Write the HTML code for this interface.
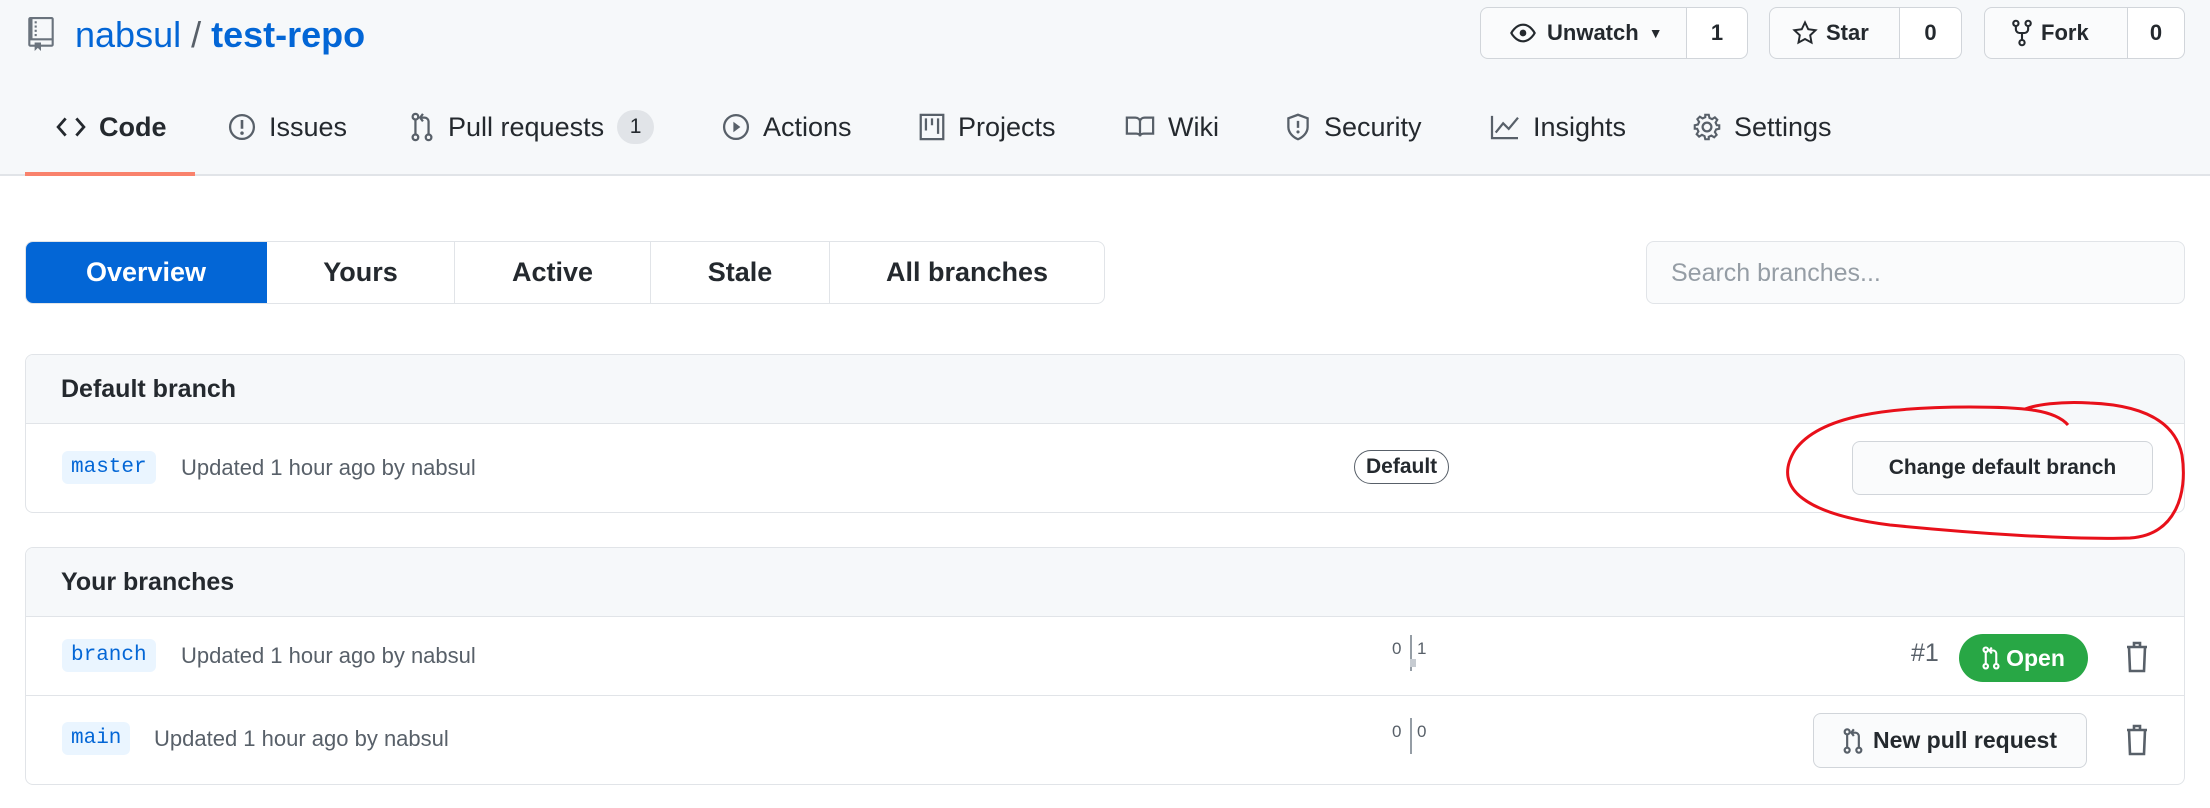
<!DOCTYPE html>
<html><head><meta charset="utf-8"><style>
*{box-sizing:border-box;margin:0;padding:0}
body{width:2210px;height:808px;background:#fff;font-family:"Liberation Sans",Arial,sans-serif;color:#24292e;position:relative;overflow:hidden}
.abs{position:absolute}
.hdr{left:0;top:0;width:2210px;height:176px;background:#f6f8fa;border-bottom:2px solid #e1e4e8}
svg{display:block}
.btn{position:absolute;height:52px;border:1px solid #d1d5da;border-radius:8px;background:#fafbfc;display:flex;align-items:center;font-size:22px;font-weight:bold}
.tab{position:absolute;top:108px;font-size:27px;color:#24292e;display:flex;align-items:center;gap:13px;height:38px}
.sub{left:25px;top:241px;width:1080px;height:63px;border:1px solid #e1e4e8;border-radius:8px;display:flex;overflow:hidden;font-size:27px;font-weight:600}
.sub div{display:flex;align-items:center;justify-content:center;border-right:1px solid #e1e4e8}
.box{left:25px;width:2160px;border:1px solid #e1e4e8;border-radius:8px;overflow:hidden}
.bh{background:#f6f8fa;border-bottom:1px solid #e1e4e8;font-size:25px;font-weight:600;padding-left:35px;display:flex;align-items:center}
.row{position:relative;border-bottom:1px solid #e1e4e8}
.badge{position:absolute;left:36px;background:#eaf5ff;color:#0366d6;font-family:"Liberation Mono",monospace;font-size:21px;border-radius:6px;padding:5px 9px}
.upd{position:absolute;font-size:22px;color:#586069}
</style></head><body>
<div class="abs hdr"></div>
<svg class="abs" style="left:28px;top:17px" width="26" height="34" viewBox="0 0 12 16"><path fill="#6a737d" d="M4 9H3V8h1v1zm0-3H3v1h1V6zm0-2H3v1h1V4zm0-2H3v1h1V2zm8-1v12c0 .55-.45 1-1 1H6v2l-1.5-1.5L3 16v-2H1c-.55 0-1-.45-1-1V1c0-.55.45-1 1-1h10c.55 0 1 .45 1 1zm-1 10H1v2h2v-1h3v1h5v-2zm0-10H2v9h9V1z"/></svg>
<div class="abs" style="left:75px;top:14px;font-size:36px;color:#0366d6">nabsul <span style="color:#586069">/</span> <b>test-repo</b></div>

<div class="btn" style="left:1480px;top:7px;width:268px">
 <div style="width:206px;display:flex;align-items:center;padding-left:28px;gap:10px;border-right:1px solid #d1d5da;height:100%"><svg width="28" height="20" viewBox="0 0 16 12"><path fill="none" stroke="#24292e" stroke-width="1.3" d="M1 6s2.5-5 7-5 7 5 7 5-2.5 5-7 5-7-5-7-5z"/><circle cx="8" cy="6" r="2" fill="#24292e"/></svg>Unwatch<span style="font-size:14px">▼</span></div>
 <div style="flex:1;text-align:center;background:#fff;height:100%;line-height:50px;border-radius:0 8px 8px 0">1</div></div>
<div class="btn" style="left:1769px;top:7px;width:193px">
 <div style="width:130px;display:flex;align-items:center;padding-left:22px;gap:8px;border-right:1px solid #d1d5da;height:100%"><svg width="26" height="26" viewBox="0 0 16 16"><path fill="none" stroke="#24292e" stroke-width="1.2" d="M8 1.5l2 4.2 4.5.6-3.3 3.1.8 4.5L8 11.7l-4 2.2.8-4.5L1.5 6.3 6 5.7z"/></svg>Star</div>
 <div style="flex:1;text-align:center;background:#fff;height:100%;line-height:50px;border-radius:0 8px 8px 0">0</div></div>
<div class="btn" style="left:1984px;top:7px;width:201px">
 <div style="width:143px;display:flex;align-items:center;padding-left:26px;gap:8px;border-right:1px solid #d1d5da;height:100%"><svg width="22" height="28" viewBox="0 0 12 16"><g fill="none" stroke="#24292e" stroke-width="1.2"><circle cx="2.5" cy="2.5" r="1.5"/><circle cx="9.5" cy="2.5" r="1.5"/><circle cx="6" cy="13.5" r="1.5"/><path d="M2.5 4v2c0 1 1 2 2 2h3c1 0 2-1 2-2V4M6 8v4"/></g></svg>Fork</div>
 <div style="flex:1;text-align:center;background:#fff;height:100%;line-height:50px;border-radius:0 8px 8px 0">0</div></div>

<div class="tab" style="left:56px;font-weight:600"><svg width="30" height="22" viewBox="0 0 14 10"><path fill="none" stroke="#24292e" stroke-width="1.3" d="M4.5 1L1 5l3.5 4M9.5 1L13 5l-3.5 4"/></svg>Code</div>
<div class="abs" style="left:25px;top:172px;width:170px;height:4px;background:#f9826c"></div>
<div class="tab" style="left:228px"><svg width="28" height="28" viewBox="0 0 16 16"><circle cx="8" cy="8" r="6.8" fill="none" stroke="#586069" stroke-width="1.3"/><path d="M8 4v5" stroke="#586069" stroke-width="1.5"/><circle cx="8" cy="11.5" r="1" fill="#586069"/></svg>Issues</div>
<div class="tab" style="left:409px"><svg width="26" height="30" viewBox="0 0 12 16"><g fill="none" stroke="#586069" stroke-width="1.2"><circle cx="2.5" cy="2.5" r="1.5"/><circle cx="2.5" cy="13.5" r="1.5"/><circle cx="9.5" cy="13.5" r="1.5"/><path d="M2.5 4v8M9.5 12V5c0-1-1-2-2-2H5M6.5 1L5 3l1.5 2"/></g></svg>Pull requests<span style="background:#e1e4e8;border-radius:20px;width:37px;height:34px;display:inline-flex;align-items:center;justify-content:center;font-size:21px">1</span></div>
<div class="tab" style="left:722px"><svg width="28" height="28" viewBox="0 0 16 16"><circle cx="8" cy="8" r="6.8" fill="none" stroke="#586069" stroke-width="1.3"/><path d="M6.5 5v6l4-3z" fill="#586069"/></svg>Actions</div>
<div class="tab" style="left:919px"><svg width="26" height="28" viewBox="0 0 15 16"><rect x="1" y="1" width="13" height="14" fill="none" stroke="#586069" stroke-width="1.3"/><path d="M4 3v7M7.5 3v4M11 3v9" stroke="#586069" stroke-width="1.3"/></svg>Projects</div>
<div class="tab" style="left:1125px"><svg width="30" height="24" viewBox="0 0 16 12"><path fill="none" stroke="#586069" stroke-width="1.2" d="M1 1h4.5c1.5 0 2.5 1 2.5 2v8c0-1-1-1.5-2-1.5H1zM15 1h-4.5C9 1 8 2 8 3v8c0-1 1-1.5 2-1.5h5z"/></svg>Wiki</div>
<div class="tab" style="left:1285px"><svg width="26" height="28" viewBox="0 0 14 16"><path fill="none" stroke="#586069" stroke-width="1.3" d="M7 1L1.5 3v5c0 3.5 3 6 5.5 7 2.5-1 5.5-3.5 5.5-7V3z"/><path d="M7 4.5v4" stroke="#586069" stroke-width="1.4"/><circle cx="7" cy="10.8" r=".9" fill="#586069"/></svg>Security</div>
<div class="tab" style="left:1490px"><svg width="30" height="26" viewBox="0 0 16 14"><path fill="none" stroke="#586069" stroke-width="1.2" d="M1 1v12h14M3 10l4-5 3 3 5-6"/></svg>Insights</div>
<div class="tab" style="left:1693px"><svg width="28" height="28" viewBox="0 0 16 16"><circle cx="8" cy="8" r="2.5" fill="none" stroke="#586069" stroke-width="1.3"/><path fill="none" stroke="#586069" stroke-width="1.2" d="M7 1h2l.4 1.8 1.5.7 1.6-1 1.4 1.4-1 1.6.7 1.5L15 7v2l-1.8.4-.7 1.5 1 1.6-1.4 1.4-1.6-1-1.5.7L9 15H7l-.4-1.8-1.5-.7-1.6 1-1.4-1.4 1-1.6-.7-1.5L1 9V7l1.8-.4.7-1.5-1-1.6 1.4-1.4 1.6 1 1.5-.7z"/></svg>Settings</div>

<div class="abs sub">
 <div style="width:241px;background:#0366d6;color:#fff;border-color:#0366d6">Overview</div>
 <div style="width:188px">Yours</div>
 <div style="width:196px">Active</div>
 <div style="width:179px">Stale</div>
 <div style="flex:1;border:none">All branches</div>
</div>
<div class="abs" style="left:1646px;top:241px;width:539px;height:63px;border:1px solid #e1e4e8;border-radius:8px;background:#fafbfc;font-size:25px;color:#959da5;padding:17px 0 0 24px">Search branches...</div>

<div class="abs box" style="top:354px;height:159px">
 <div class="bh" style="height:69px">Default branch</div>
 <div class="row" style="height:90px;border:none">
  <span class="badge" style="top:27px">master</span>
  <span class="upd" style="left:155px;top:31px">Updated 1 hour ago by nabsul</span>
  <span class="abs" style="left:1328px;top:26px;border:1.5px solid #586069;border-radius:20px;padding:4px 11px;font-size:21px;font-weight:bold">Default</span>
  <span class="btn" style="left:1826px;top:17px;width:301px;height:54px;justify-content:center;font-size:21px">Change default branch</span>
 </div>
</div>
<svg class="abs" style="left:1770px;top:395px" width="440" height="160" viewBox="0 0 440 160"><path fill="none" stroke="#e8101a" stroke-width="3" d="M298 30C285 15 255 12 200 12 120 12 50 20 25 55 0 95 40 120 120 130 200 138 300 145 360 143 405 140 418 100 412 60 405 25 370 10 320 8 290 6 265 10 255 14"/></svg>

<div class="abs box" style="top:547px;height:238px">
 <div class="bh" style="height:69px">Your branches</div>
 <div class="row" style="height:79px">
  <span class="badge" style="top:22px">branch</span>
  <span class="upd" style="left:155px;top:26px">Updated 1 hour ago by nabsul</span>
  <span class="abs" style="left:1366px;top:22px;font-size:17px;color:#586069">0</span>
  <span class="abs" style="left:1384px;top:18px;width:2px;height:36px;background:#959da5"></span>
  <span class="abs" style="left:1384px;top:42px;width:6px;height:8px;background:#c6cbd1"></span>
  <span class="abs" style="left:1391px;top:22px;font-size:17px;color:#586069">1</span>
  <span class="abs" style="left:1885px;top:22px;font-size:25px;color:#586069">#1</span>
  <span class="abs" style="left:1933px;top:17px;width:129px;height:48px;background:#28a745;border-radius:25px;color:#fff;font-size:23px;font-weight:bold;display:flex;align-items:center;justify-content:center;gap:6px"><svg width="18" height="24" viewBox="0 0 12 16"><g fill="none" stroke="#fff" stroke-width="1.4"><circle cx="2.5" cy="2.5" r="1.5"/><circle cx="2.5" cy="13.5" r="1.5"/><circle cx="9.5" cy="13.5" r="1.5"/><path d="M2.5 4v8M9.5 12V5c0-1-1-2-2-2H5M6.5 1L5 3l1.5 2"/></g></svg>Open</span>
  <svg class="abs" style="left:2099px;top:24px" width="24" height="32" viewBox="0 0 12 16"><path fill="none" stroke="#586069" stroke-width="1.3" d="M1 3h10M4.5 3V1h3v2M2 3l.5 12h7L10 3"/></svg>
 </div>
 <div class="row" style="height:90px;border:none">
  <span class="badge" style="top:26px">main</span>
  <span class="upd" style="left:128px;top:30px">Updated 1 hour ago by nabsul</span>
  <span class="abs" style="left:1366px;top:26px;font-size:17px;color:#586069">0</span>
  <span class="abs" style="left:1384px;top:22px;width:2px;height:36px;background:#959da5"></span>
  <span class="abs" style="left:1391px;top:26px;font-size:17px;color:#586069">0</span>
  <span class="btn" style="left:1787px;top:17px;width:274px;height:55px;justify-content:center;gap:10px;font-size:23px"><svg width="20" height="30" viewBox="0 0 12 16"><g fill="none" stroke="#586069" stroke-width="1.3"><circle cx="2.5" cy="2.5" r="1.5"/><circle cx="2.5" cy="13.5" r="1.5"/><circle cx="9.5" cy="13.5" r="1.5"/><path d="M2.5 4v8M9.5 12V5c0-1-1-2-2-2H5M6.5 1L5 3l1.5 2"/></g></svg>New pull request</span>
  <svg class="abs" style="left:2099px;top:28px" width="24" height="32" viewBox="0 0 12 16"><path fill="none" stroke="#586069" stroke-width="1.3" d="M1 3h10M4.5 3V1h3v2M2 3l.5 12h7L10 3"/></svg>
 </div>
</div>
</body></html>
